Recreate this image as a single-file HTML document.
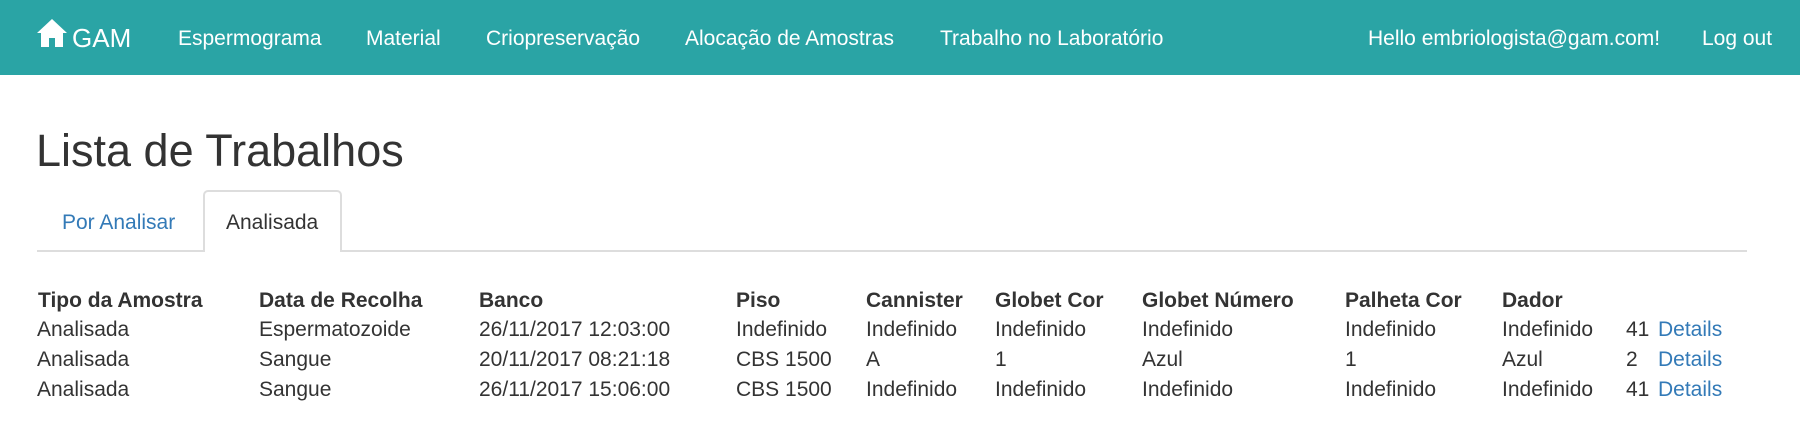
<!DOCTYPE html>
<html><head><meta charset="utf-8"><style>
*{margin:0;padding:0;box-sizing:border-box}
body{width:1800px;height:437px;background:#fff;font-family:"Liberation Sans",Arial,sans-serif;color:#333;position:relative;overflow:hidden;font-size:21px}
.nav{position:absolute;left:0;top:0;width:1800px;height:75px;background:#2aa4a5}
.a{position:absolute;white-space:nowrap;line-height:1}
.nv{color:#fff;font-size:21px;top:28px}
.c{position:absolute;white-space:nowrap;font-size:21px;line-height:1}
.b{font-weight:bold}
.lk{color:#337ab7}
</style></head><body>
<div class="nav">
<svg style="position:absolute;left:37px;top:19px" width="30" height="28" viewBox="0 0 30 28"><path d="M15 0 L30 14 L26 14 L26 28 L18 28 L18 19 L12 19 L12 28 L4 28 L4 14 L0 14 Z" fill="#fff"/></svg>
<div class="a" style="left:72px;top:25px;color:#fff;font-size:26px">GAM</div>
<div class="a nv" style="left:178px">Espermograma</div>
<div class="a nv" style="left:366px">Material</div>
<div class="a nv" style="left:486px">Criopreservação</div>
<div class="a nv" style="left:685px">Alocação de Amostras</div>
<div class="a nv" style="left:940px">Trabalho no Laboratório</div>
<div class="a nv" style="left:1368px">Hello embriologista@gam.com!</div>
<div class="a nv" style="left:1702px">Log out</div>
</div>
<div class="a" style="left:36px;top:128px;font-size:45px;font-weight:normal">Lista de Trabalhos</div>
<div style="position:absolute;left:37px;top:250px;width:1710px;height:2px;background:#ddd"></div>
<div style="position:absolute;left:203px;top:190px;width:139px;height:62px;border:2px solid #ddd;border-bottom:none;border-radius:5px 5px 0 0;background:#fff"></div>
<div class="a lk" style="left:62px;top:212px;font-size:21px">Por Analisar</div>
<div class="a" style="left:226px;top:212px;font-size:21px">Analisada</div>

<div class="c b" style="left:38px;top:290px">Tipo da Amostra</div>
<div class="c b" style="left:259px;top:290px">Data de Recolha</div>
<div class="c b" style="left:479px;top:290px">Banco</div>
<div class="c b" style="left:736px;top:290px">Piso</div>
<div class="c b" style="left:866px;top:290px">Cannister</div>
<div class="c b" style="left:995px;top:290px">Globet Cor</div>
<div class="c b" style="left:1142px;top:290px">Globet Número</div>
<div class="c b" style="left:1345px;top:290px">Palheta Cor</div>
<div class="c b" style="left:1502px;top:290px">Dador</div>

<div class="c" style="left:37px;top:319px">Analisada</div>
<div class="c" style="left:259px;top:319px">Espermatozoide</div>
<div class="c" style="left:479px;top:319px">26/11/2017 12:03:00</div>
<div class="c" style="left:736px;top:319px">Indefinido</div>
<div class="c" style="left:866px;top:319px">Indefinido</div>
<div class="c" style="left:995px;top:319px">Indefinido</div>
<div class="c" style="left:1142px;top:319px">Indefinido</div>
<div class="c" style="left:1345px;top:319px">Indefinido</div>
<div class="c" style="left:1502px;top:319px">Indefinido</div>
<div class="c" style="left:1626px;top:319px">41</div>
<div class="c lk" style="left:1658px;top:319px">Details</div>

<div class="c" style="left:37px;top:349px">Analisada</div>
<div class="c" style="left:259px;top:349px">Sangue</div>
<div class="c" style="left:479px;top:349px">20/11/2017 08:21:18</div>
<div class="c" style="left:736px;top:349px">CBS 1500</div>
<div class="c" style="left:866px;top:349px">A</div>
<div class="c" style="left:995px;top:349px">1</div>
<div class="c" style="left:1142px;top:349px">Azul</div>
<div class="c" style="left:1345px;top:349px">1</div>
<div class="c" style="left:1502px;top:349px">Azul</div>
<div class="c" style="left:1626px;top:349px">2</div>
<div class="c lk" style="left:1658px;top:349px">Details</div>

<div class="c" style="left:37px;top:379px">Analisada</div>
<div class="c" style="left:259px;top:379px">Sangue</div>
<div class="c" style="left:479px;top:379px">26/11/2017 15:06:00</div>
<div class="c" style="left:736px;top:379px">CBS 1500</div>
<div class="c" style="left:866px;top:379px">Indefinido</div>
<div class="c" style="left:995px;top:379px">Indefinido</div>
<div class="c" style="left:1142px;top:379px">Indefinido</div>
<div class="c" style="left:1345px;top:379px">Indefinido</div>
<div class="c" style="left:1502px;top:379px">Indefinido</div>
<div class="c" style="left:1626px;top:379px">41</div>
<div class="c lk" style="left:1658px;top:379px">Details</div>
</body></html>
